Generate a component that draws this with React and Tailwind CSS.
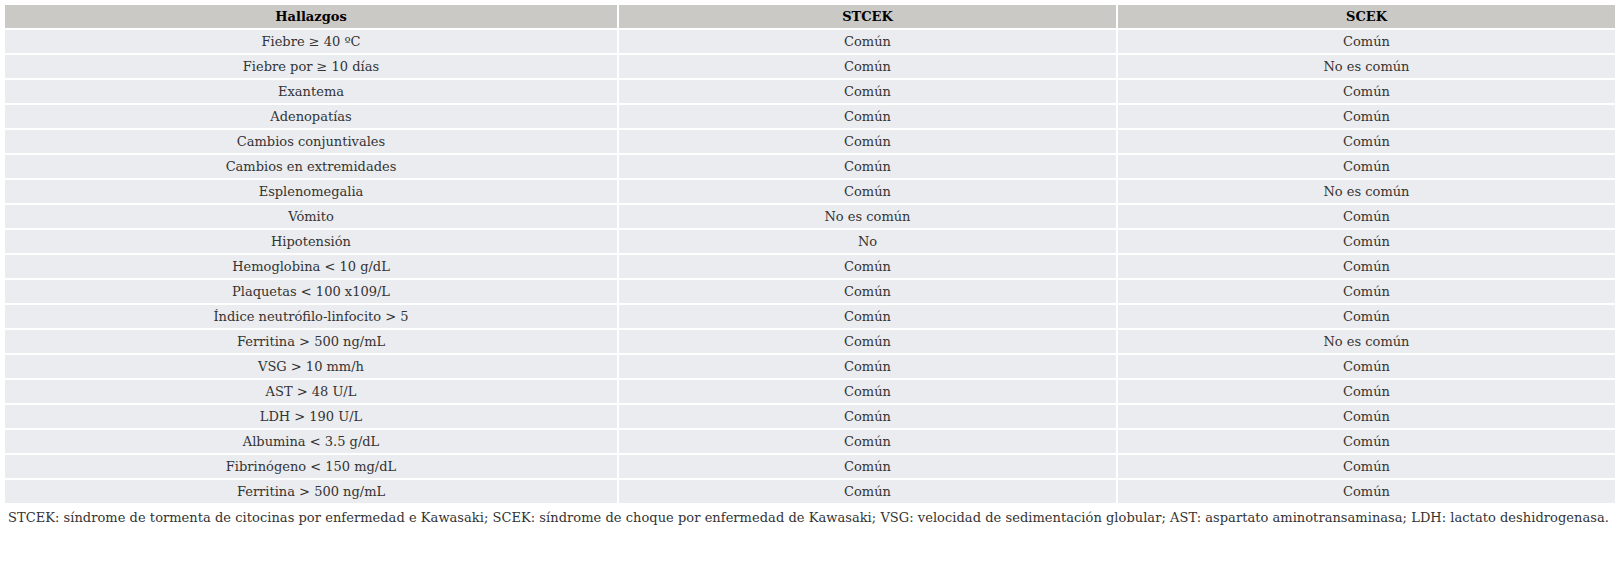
import React from "react";

const rows = [
  ["Fiebre ≥ 40 ºC", "Común", "Común"],
  ["Fiebre por ≥ 10 días", "Común", "No es común"],
  ["Exantema", "Común", "Común"],
  ["Adenopatías", "Común", "Común"],
  ["Cambios conjuntivales", "Común", "Común"],
  ["Cambios en extremidades", "Común", "Común"],
  ["Esplenomegalia", "Común", "No es común"],
  ["Vómito", "No es común", "Común"],
  ["Hipotensión", "No", "Común"],
  ["Hemoglobina < 10 g/dL", "Común", "Común"],
  ["Plaquetas < 100 x109/L", "Común", "Común"],
  ["Índice neutrófilo-linfocito > 5", "Común", "Común"],
  ["Ferritina > 500 ng/mL", "Común", "No es común"],
  ["VSG > 10 mm/h", "Común", "Común"],
  ["AST > 48 U/L", "Común", "Común"],
  ["LDH > 190 U/L", "Común", "Común"],
  ["Albumina < 3.5 g/dL", "Común", "Común"],
  ["Fibrinógeno < 150 mg/dL", "Común", "Común"],
  ["Ferritina > 500 ng/mL", "Común", "Común"],
];

const App = () => {
  return (
    <div
      className="min-h-screen bg-white px-[3px] pt-[3px] text-[13px] text-[#333]"
      style={{ fontFamily: '"DejaVu Serif", serif' }}
    >
      <table className="w-[1614px] table-fixed border-separate border-spacing-[2px]">
        <colgroup>
          <col className="w-[612px]" />
          <col className="w-[497px]" />
          <col className="w-[497px]" />
        </colgroup>
        <thead>
          <tr>
            <th className="h-[23px] bg-[#cbc9c6] p-0 text-center font-bold text-black">Hallazgos</th>
            <th className="h-[23px] bg-[#cbc9c6] p-0 text-center font-bold text-black">STCEK</th>
            <th className="h-[23px] bg-[#cbc9c6] p-0 text-center font-bold text-black">SCEK</th>
          </tr>
        </thead>
        <tbody>
          {rows.map((row, i) => (
            <tr key={i}>
              {row.map((cell, j) => (
                <td key={j} className="h-[23px] bg-[#ebecf0] p-0 text-center leading-none">
                  {cell}
                </td>
              ))}
            </tr>
          ))}
        </tbody>
      </table>
      <p className="mt-[3px] pl-[5px] leading-5 tracking-[0.04px]">
        STCEK: síndrome de tormenta de citocinas por enfermedad e Kawasaki; SCEK: síndrome de choque por
        enfermedad de Kawasaki; VSG: velocidad de sedimentación globular; AST: aspartato aminotransaminasa; LDH:
        lactato deshidrogenasa.
      </p>
    </div>
  );
};

export default App;
